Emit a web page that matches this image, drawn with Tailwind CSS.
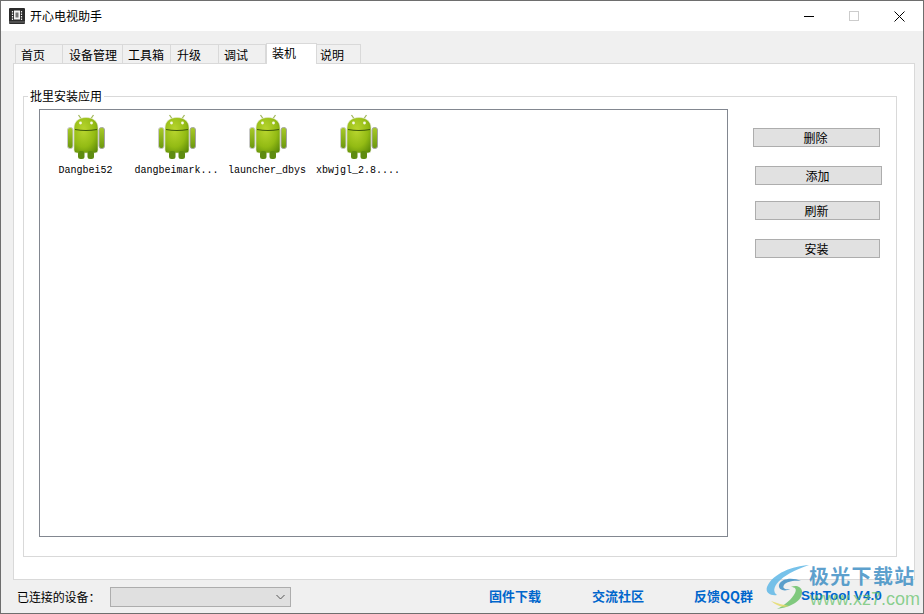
<!DOCTYPE html>
<html lang="zh-CN">
<head>
  <meta charset="UTF-8" />
  <title>开心电视助手</title>
  <script src="https://cdn.jsdelivr.net/npm/@tailwindcss/browser@4"></script>
</head>
<body class="bg-[#f0f0f0]">
  <!-- shared android icon -->
  <svg width="0" height="0" class="absolute">
    <defs>
      <radialGradient id="droidBody" cx="0.4" cy="0.35" r="0.8">
        <stop offset="0" stop-color="#b9d62f" />
        <stop offset="0.6" stop-color="#93bb14" />
        <stop offset="1" stop-color="#5c8a08" />
      </radialGradient>
      <linearGradient id="droidArm" x1="0" y1="0" x2="0" y2="1">
        <stop offset="0" stop-color="#a9cb28" />
        <stop offset="1" stop-color="#6b980e" />
      </linearGradient>
      <symbol id="droid" viewBox="0 0 38 45">
        <path d="M11.500 1 15 6M26.500 1 23 6" stroke="#a3b85e" stroke-width="1.300" fill="none" />
        <path d="M7 14C7 7.500 12 3.500 19 3.500S31 7.500 31 14V36Q31 39 28 39H10Q7 39 7 36Z" fill="url(#droidBody)" stroke="#e4e8d0" stroke-width=".6" />
        <circle cx="13.500" cy="9" r="1.400" fill="#f7fae6" />
        <circle cx="24.500" cy="9" r="1.400" fill="#f7fae6" />
        <path d="M8 15.500Q19 17.500 30 15.500" stroke="#3d5a08" stroke-width="1.100" fill="none" />
        <rect x="0.500" y="13.500" width="5.500" height="21" rx="2.500" fill="url(#droidArm)" stroke="#c9c9c9" />
        <rect x="32" y="13.500" width="5.500" height="21" rx="2.500" fill="url(#droidArm)" stroke="#a3a3a3" />
        <rect x="11" y="37" width="6.500" height="8" rx="2.500" fill="#5f8c10" />
        <rect x="20.500" y="37" width="6.500" height="8" rx="2.500" fill="#5f8c10" />
      </symbol>
    </defs>
  </svg>

  <div class="w-[924px] h-[614px] border border-[#6e6e6e] bg-[#f0f0f0] flex flex-col overflow-hidden relative font-['Noto_Sans_CJK_SC','Liberation_Sans',sans-serif] text-[12px] text-black">
    <!-- title bar -->
    <div class="h-[30px] bg-white flex items-center shrink-0">
      <svg class="ml-[8px] mr-[5px]" width="16" height="16" viewBox="0 0 16 16">
        <rect width="16" height="16" rx="1" fill="#2b2b2b" />
        <rect x="5" y="2.500" width="6" height="9" fill="#f2f2f2" />
        <rect x="6.500" y="4.500" width="3" height="5" fill="#777" />
        <path d="M3.500 3v9M12.500 3v9" stroke="#eee" stroke-width="1.200" stroke-dasharray="1.500 1" />
        <rect y="13.500" width="16" height="1" fill="#777" />
      </svg>
      <span class="text-[12px]">开心电视助手</span>
      <div class="ml-auto flex items-center">
        <div class="w-[10px] h-px bg-black mr-[35px]"></div>
        <div class="w-[10px] h-[10px] border border-[#cccccc] mr-[35px]"></div>
        <svg class="mr-[18px]" width="11" height="11" viewBox="0 0 11 11"><path d="M.5.5l10 10M10.500.5l-10 10" stroke="#000" stroke-width="1" fill="none" /></svg>
      </div>
    </div>

    <!-- tabs -->
    <div class="flex items-end h-[32px] pl-[14px] shrink-0 relative z-10">
      <div class="w-[48px] h-[19px] bg-[#f0f0f0] border border-b-0 border-[#d9d9d9] pl-[5px] leading-[19px]">首页</div>
      <div class="w-[60px] h-[19px] bg-[#f0f0f0] border border-b-0 border-l-0 border-[#d9d9d9] pl-[6px] leading-[19px]">设备管理</div>
      <div class="w-[48px] h-[19px] bg-[#f0f0f0] border border-b-0 border-l-0 border-[#d9d9d9] pl-[5px] leading-[19px]">工具箱</div>
      <div class="w-[48px] h-[19px] bg-[#f0f0f0] border border-b-0 border-l-0 border-[#d9d9d9] pl-[6px] leading-[19px]">升级</div>
      <div class="w-[47px] h-[19px] bg-[#f0f0f0] border border-b-0 border-l-0 border-[#d9d9d9] pl-[5px] leading-[19px]">调试</div>
      <div class="w-[51px] h-[21px] -mb-px bg-white border border-b-0 border-[#d9d9d9] pl-[5px] leading-[17px]">装机</div>
      <div class="w-[44px] h-[19px] bg-[#f0f0f0] border border-b-0 border-l-0 border-[#d9d9d9] pl-[3px] leading-[19px]">说明</div>
    </div>

    <!-- tab page -->
    <div class="ml-[12px] w-[902px] h-[517px] shrink-0 bg-white border border-[#d9d9d9] pl-[9px] pt-[26px]">
      <fieldset class="w-[874px] h-[467px] border border-[#d9d9d9] relative">
        <legend class="ml-[4px] px-[2px] leading-[12px] text-[12px]">批里安装应用</legend>
        <div class="flex">
          <!-- apk list -->
          <div class="ml-[15px] mt-[7px] w-[689px] h-[428px] border border-[#828790] bg-white grid grid-cols-[repeat(auto-fill,91px)] content-start">
            <div class="flex flex-col items-center pt-[4px]">
              <svg class="ml-px" width="38" height="45"><use href="#droid" /></svg>
              <span class="mt-[6px] font-['Liberation_Mono',monospace] text-[10px] leading-[12px]">Dangbei52</span>
            </div>
            <div class="flex flex-col items-center pt-[4px]">
              <svg class="ml-px" width="38" height="45"><use href="#droid" /></svg>
              <span class="mt-[6px] font-['Liberation_Mono',monospace] text-[10px] leading-[12px]">dangbeimark...</span>
            </div>
            <div class="flex flex-col items-center pt-[4px]">
              <svg class="ml-px" width="38" height="45"><use href="#droid" /></svg>
              <span class="mt-[6px] -ml-px font-['Liberation_Mono',monospace] text-[10px] leading-[12px]">launcher_dbys</span>
            </div>
            <div class="flex flex-col items-center pt-[4px]">
              <svg class="ml-px" width="38" height="45"><use href="#droid" /></svg>
              <span class="mt-[6px] -ml-px font-['Liberation_Mono',monospace] text-[10px] leading-[12px]">xbwjgl_2.8....</span>
            </div>
          </div>
          <!-- buttons -->
          <div class="flex flex-col ml-[25px] pt-[26px]">
            <button class="w-[127px] h-[19px] bg-[#e1e1e1] border border-[#adadad] leading-[17px] pr-[2px]">删除</button>
            <button class="w-[127px] h-[19px] ml-[2px] mt-[19px] bg-[#e1e1e1] border border-[#adadad] leading-[15px] pr-[2px]">添加</button>
            <button class="w-[125px] h-[19px] ml-[2px] mt-[16px] bg-[#e1e1e1] border border-[#adadad] leading-[17px] pr-[2px]">刷新</button>
            <button class="w-[125px] h-[19px] ml-[2px] mt-[19px] bg-[#e1e1e1] border border-[#adadad] leading-[17px] pr-[2px]">安装</button>
          </div>
        </div>
      </fieldset>
    </div>

    <!-- status row -->
    <div class="flex items-center h-[20px] mt-[7px] pl-[16px] relative">
      <span class="w-[93px] tracking-[-0.1px]">已连接的设备：</span>
      <div class="w-[181px] h-[20px] bg-[#e0e0e0] border border-[#adadad] flex items-center justify-end pr-[5px]">
        <svg width="9" height="6" viewBox="0 0 9 6"><path d="M.5 1l4 4 4-4" stroke="#555" fill="none" /></svg>
      </div>
      <a class="ml-[198px] -mt-[2px] font-bold text-[13px] text-[#0066cc] w-[103px]">固件下载</a>
      <a class="-mt-[2px] font-bold text-[13px] text-[#0066cc] w-[102px]">交流社区</a>
      <a class="-mt-[2px] font-bold text-[13px] text-[#0066cc] w-[107px]">反馈QQ群</a>
      <a class="-mt-[2px] font-bold text-[#0066cc] font-['Liberation_Sans',sans-serif] text-[13.500px] whitespace-nowrap">StbTool V4.0</a>
    </div>

    <!-- site watermark over the corner -->
    <div class="absolute left-[764px] top-[562px] w-[156px] h-[50px] pointer-events-none">
      <svg class="absolute left-0 top-0" width="48" height="48" viewBox="0 0 48 48" fill="none">
        <path d="M44 2C28 3 8 10 2 24c-2 6 4 9 10 8C4 26 14 12 44 2Z" fill="#5fb7e6" fill-opacity=".85" />
        <path d="M36 18c-8-4-20-3-22 4-1 5 6 7 11 4-5 1-8-1-6-4 2-3 9-5 17-4Z" fill="#3f8fc4" fill-opacity=".85" />
        <path d="M12 46c14-2 26-8 25-18-1-5-7-6-11-4 4 0 6 2 4 6-3 6-10 12-18 16Z" fill="#6cc26a" fill-opacity=".85" />
        <path d="M6 38c6 5 12 7 18 5-6-1-12-3-18-5Z" fill="#e5dc6a" fill-opacity=".85" />
      </svg>
      <span class="absolute left-[44px] top-[0px] text-[20px] leading-[26px] font-bold tracking-[1.300px] text-[#3f8fc4]/85 whitespace-nowrap">极光下载站</span>
      <span class="absolute left-[45px] top-[26px] text-[18px] leading-[20px] font-['Liberation_Sans',sans-serif] text-[#5cbf62]/70 whitespace-nowrap">www.xz7.com</span>
    </div>
  </div>
</body>
</html>
